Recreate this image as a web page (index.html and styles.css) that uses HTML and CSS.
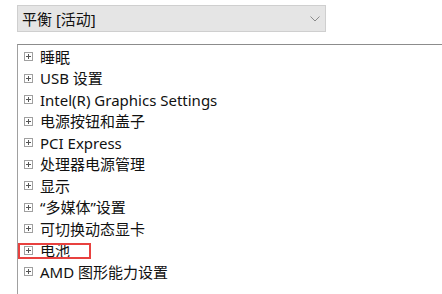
FILE: index.html
```html
<!DOCTYPE html>
<html lang="zh-CN">
<head>
<meta charset="utf-8">
<link rel="stylesheet" href="styles.css">
</head>
<body>
<div class="page">
  <div class="select">
    <span class="select-text">平衡 [活动]</span>
    <svg class="chev" width="10" height="6" viewBox="0 0 10 6"><path d="M0.5 0.5 L5 5 L9.5 0.5" fill="none" stroke="#8a8a8a" stroke-width="1"/></svg>
  </div>
  <div class="tree">
    <div class="row"><span class="plus"></span><span class="label">睡眠</span></div>
    <div class="row"><span class="plus"></span><span class="label">USB 设置</span></div>
    <div class="row"><span class="plus"></span><span class="label">Intel(R) Graphics Settings</span></div>
    <div class="row"><span class="plus"></span><span class="label">电源按钮和盖子</span></div>
    <div class="row"><span class="plus"></span><span class="label">PCI Express</span></div>
    <div class="row"><span class="plus"></span><span class="label">处理器电源管理</span></div>
    <div class="row"><span class="plus"></span><span class="label">显示</span></div>
    <div class="row"><span class="plus"></span><span class="label">“多媒体”设置</span></div>
    <div class="row"><span class="plus"></span><span class="label">可切换动态显卡</span></div>
    <div class="row highlighted"><span class="plus"></span><span class="label">电池</span></div>
    <div class="row"><span class="plus"></span><span class="label">AMD 图形能力设置</span></div>
  </div>
</div>
</body>
</html>
```
FILE: styles.css
```css
html, body {
  margin: 0;
  padding: 0;
  background: #ffffff;
}
body {
  font-family: "Noto Sans", "Noto Sans CJK SC", sans-serif;
  color: #111111;
  overflow: hidden;
}
.page {
  padding: 5px 0 0 17px;
}
.select {
  width: 309px;
  height: 27px;
  box-sizing: border-box;
  background: #e5e5e5;
  border: 1px solid #cfcfcf;
  display: flex;
  align-items: center;
  justify-content: space-between;
  padding: 0 6px 0 4px;
}
.select-text {
  font-size: 15px;
  line-height: 20px;
}
.chev {
  margin-right: -1px;
  margin-top: 1px;
}
.tree {
  margin-top: 12px;
  width: 440px;
  height: 260px;
  box-sizing: border-box;
  border-top: 1px solid #8c8c8c;
  border-left: 1px solid #a0a0a0;
  padding-top: 1px;
  padding-left: 6px;
}
.row {
  display: flex;
  align-items: center;
  height: 21.5px;
  position: relative;
}
.plus {
  width: 9px;
  height: 9px;
  box-sizing: border-box;
  border: 1px solid #a0a0a0;
  position: relative;
  margin-right: 7px;
  flex: none;
}
.plus::before {
  content: "";
  position: absolute;
  left: 1px;
  top: 3px;
  width: 5px;
  height: 1px;
  background: #555;
}
.plus::after {
  content: "";
  position: absolute;
  left: 3px;
  top: 1px;
  width: 1px;
  height: 5px;
  background: #555;
}
.label {
  font-size: 15px;
  line-height: 20px;
  white-space: nowrap;
}
.highlighted::after {
  content: "";
  position: absolute;
  left: -6px;
  top: 3px;
  width: 69px;
  height: 12px;
  border: 2px solid #e8413f;
}
```
